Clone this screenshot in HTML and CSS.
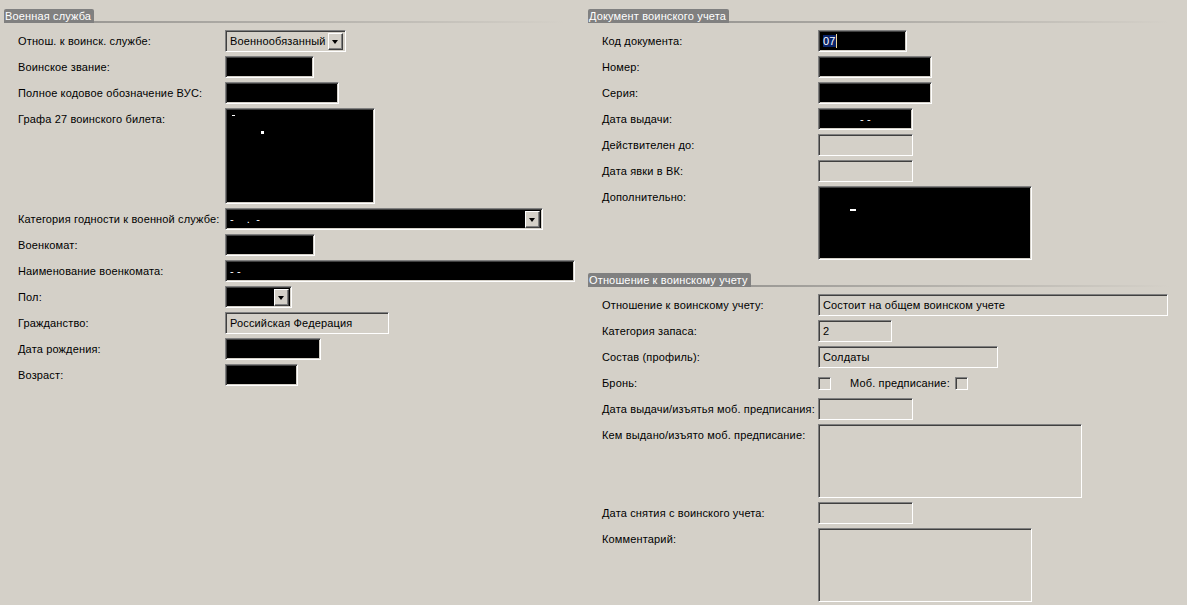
FILE: index.html
```html
<!DOCTYPE html>
<html lang="ru">
<head>
  <meta charset="UTF-8" />
  <title>Воинский учет</title>
  <link rel="stylesheet" href="styles.css">
</head>
<body>
  <div class="form">

    <!-- Левая колонка -->
    <div class="col">
      <div class="group">
        <div class="group-title"><span>Военная служба</span></div>
        <div class="rows">
          <label>Отнош. к воинск. службе:</label>
          <div class="field combo w121">
            <span class="combo-text">Военнообязанный</span>
            <span class="combo-btn"></span>
          </div>

          <label>Воинское звание:</label>
          <div class="field masked w89"></div>

          <label>Полное кодовое обозначение ВУС:</label>
          <div class="field masked w114"></div>

          <label>Графа 27 воинского билета:</label>
          <div class="field masked area w150 h96"><span class="speck s1"></span><span class="speck s2"></span></div>

          <label>Категория годности к военной службе:</label>
          <div class="field combo masked w318">
            <span class="combo-text">-&nbsp;&nbsp;&nbsp;&nbsp;.&nbsp;&nbsp;-</span>
            <span class="combo-btn"></span>
          </div>

          <label>Военкомат:</label>
          <div class="field masked w90"></div>

          <label>Наименование военкомата:</label>
          <div class="field masked w350">- -</div>

          <label>Пол:</label>
          <div class="field combo masked w67">
            <span class="combo-text"></span>
            <span class="combo-btn"></span>
          </div>

          <label>Гражданство:</label>
          <div class="field w164">Российская Федерация</div>

          <label>Дата рождения:</label>
          <div class="field masked w96"></div>

          <label>Возраст:</label>
          <div class="field masked w73"></div>
        </div>
      </div>
    </div>

    <!-- Правая колонка -->
    <div class="col right">
      <div class="group">
        <div class="group-title"><span>Документ воинского учета</span></div>
        <div class="rows">
          <label>Код документа:</label>
          <div class="field masked w89"><span class="sel">07</span><span class="caret"></span></div>

          <label>Номер:</label>
          <div class="field masked w114"></div>

          <label>Серия:</label>
          <div class="field masked w114"></div>

          <label>Дата выдачи:</label>
          <div class="field masked w95 center">- -</div>

          <label>Действителен до:</label>
          <div class="field w95"></div>

          <label>Дата явки в ВК:</label>
          <div class="field w95"></div>

          <label>Дополнительно:</label>
          <div class="field masked area w214 h74"><span class="speck s3"></span></div>
        </div>
      </div>

      <div class="group">
        <div class="group-title"><span>Отношение к воинскому учету</span></div>
        <div class="rows">
          <label>Отношение к воинскому учету:</label>
          <div class="field w350">Состоит на общем воинском учете</div>

          <label>Категория запаса:</label>
          <div class="field w74">2</div>

          <label>Состав (профиль):</label>
          <div class="field w180">Солдаты</div>

          <label>Бронь:</label>
          <div class="checks">
            <span class="check"></span>
            <span class="check-label">Моб. предписание:</span>
            <span class="check"></span>
          </div>

          <label>Дата выдачи/изъятья моб. предписания:</label>
          <div class="field w95"></div>

          <label>Кем выдано/изъято моб. предписание:</label>
          <div class="field area w264 h74"></div>

          <label>Дата снятия с воинского учета:</label>
          <div class="field w95"></div>

          <label>Комментарий:</label>
          <div class="field area w214 h74"></div>
        </div>
      </div>
    </div>

  </div>
</body>
</html>
```

FILE: styles.css
```css
* {
  box-sizing: border-box;
  margin: 0;
  padding: 0;
}

body {
  background: #d4d0c8;
  font-family: Tahoma, "Liberation Sans", Arial, sans-serif;
  font-size: 11px;
  letter-spacing: 0.15px;
  color: #000;
  overflow: hidden;
}

.form {
  display: grid;
  grid-template-columns: 584px 1fr;
  padding-top: 9px;
}

.group {
  padding-left: 4px;
}

.group + .group {
  margin-top: 13px;
}

/* заголовок группы: темная плашка и линия, уходящая вправо */
.group-title {
  display: flex;
  align-items: flex-end;
  height: 14px;
  margin-bottom: 7px;
}

.group-title span {
  background: #808080;
  color: #fff;
  line-height: 14px;
  padding: 0 3px 0 1px;
  border-radius: 2px 2px 0 0;
  white-space: nowrap;
}

.group-title::after {
  content: "";
  flex: 1;
  height: 2px;
  background: linear-gradient(to right, #9b9995, #d4d0c8 96%);
}

.rows {
  display: grid;
  grid-template-columns: 207px 1fr;
  row-gap: 4px;
  padding-left: 14px;
  align-items: start;
}

.right .rows {
  grid-template-columns: 216px 1fr;
}

.rows label {
  line-height: 22px;
  white-space: nowrap;
}

/* утопленное поле в стиле Windows */
.field {
  position: relative;
  height: 22px;
  border: 1px solid;
  border-color: #808080 #fff #fff #808080;
  box-shadow: inset 1px 1px 0 #404040, inset -1px -1px 0 #d4d0c8;
  padding: 0 4px;
  line-height: 20px;
  white-space: nowrap;
  overflow: hidden;
}

.masked {
  background: #000;
  color: #fff;
}

.center {
  text-align: center;
}

.area {
  line-height: 16px;
}

.h96 { height: 96px; }
.h74 { height: 74px; }

.w67 { width: 67px; }
.w73 { width: 73px; }
.w74 { width: 74px; }
.w89 { width: 89px; }
.w90 { width: 90px; }
.w95 { width: 95px; }
.w96 { width: 96px; }
.w114 { width: 114px; }
.w121 { width: 121px; }
.w150 { width: 150px; }
.w164 { width: 164px; }
.w180 { width: 180px; }
.w214 { width: 214px; }
.w264 { width: 264px; }
.w318 { width: 318px; }
.w350 { width: 350px; }

/* выпадающий список */
.combo {
  display: flex;
  align-items: center;
  padding: 2px 2px 2px 4px;
}

.combo-text {
  flex: 1;
  overflow: hidden;
}

.combo-btn {
  position: relative;
  flex: none;
  width: 15px;
  height: 17px;
  background: #d4d0c8;
  border: 1px solid;
  border-color: #fff #404040 #404040 #fff;
  box-shadow: inset -1px -1px 0 #808080;
}

.combo-btn::after {
  content: "";
  position: absolute;
  left: 3px;
  top: 6px;
  border-left: 3.5px solid transparent;
  border-right: 3.5px solid transparent;
  border-top: 4px solid #000;
}

/* выделенный текст и курсор */
.sel {
  background: #0a246a;
  color: #fff;
}

.caret {
  display: inline-block;
  width: 1px;
  height: 14px;
  background: #f3dca0;
  vertical-align: -3px;
}

/* белые точки поверх закраски */
.speck {
  position: absolute;
  background: #fff;
  height: 1px;
}

.s1 { left: 6px; top: 6px; width: 3px; }
.s2 { left: 35px; top: 22px; width: 3px; height: 3px; }
.s3 { left: 31px; top: 22px; width: 6px; height: 2px; }

.checks {
  display: flex;
  align-items: center;
  height: 22px;
}

.check {
  width: 13px;
  height: 13px;
  border: 1px solid;
  border-color: #808080 #fff #fff #808080;
  box-shadow: inset 1px 1px 0 #404040, inset -1px -1px 0 #d4d0c8;
}

.check-label {
  margin: 0 5px 0 19px;
}
```
